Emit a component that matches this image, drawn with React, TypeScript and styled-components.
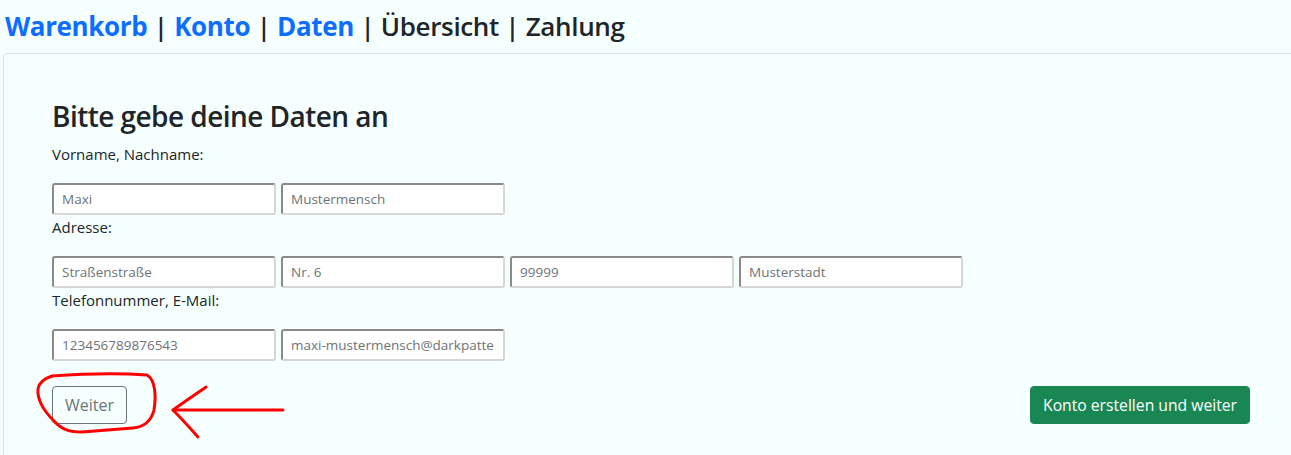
import { createGlobalStyle, styled } from "styled-components";

const GlobalStyle = createGlobalStyle`
  html, body {
    margin: 0;
    padding: 0;
    overflow: hidden;
    background-color: #f5fffe;
  }
  body {
    font-family: "Open Sans", "Noto Sans", sans-serif;
    color: #212529;
  }
`;

const Steps = styled.div`
  margin: 11px 0 11px 5px;
  font-size: 26px;
  line-height: 1.2;
  font-weight: 600;
  letter-spacing: -0.35px;
  white-space: nowrap;
`;

const Step = styled.span<{ $done?: boolean }>`
  color: ${(p) => (p.$done ? "#0d6efd" : "#212529")};
  font-weight: ${(p) => (p.$done ? 700 : 600)};
`;

const Card = styled.div`
  position: relative;
  margin-left: 3px;
  width: 1296px;
  box-sizing: border-box;
  border: 1px solid #dde3e3;
  border-radius: 4px;
  padding: 46px 48px 33px;
`;

const Title = styled.h3`
  margin: 0 0 8px;
  font-size: 28px;
  line-height: 1.2;
  font-weight: 600;
  letter-spacing: -0.55px;
`;

const Label = styled.div`
  font-size: 15px;
  line-height: 24px;
  margin-bottom: 17px;
`;

const Row = styled.div`
  display: flex;
  gap: 5px;
`;

const Field = styled.input`
  width: 224px;
  height: 32px;
  box-sizing: border-box;
  padding: 0 8px;
  border-style: solid;
  border-width: 2px;
  border-color: #8a8a8a #d6d6d6 #d6d6d6 #8a8a8a;
  border-radius: 3px;
  background: #fff;
  font-family: "Open Sans", "Noto Sans", sans-serif;
  font-size: 13.5px;
  color: #212529;
  &::placeholder {
    color: #6e7378;
  }
`;

const Actions = styled.div`
  position: relative;
  display: flex;
  justify-content: space-between;
  align-items: flex-start;
  margin-top: 25px;
`;

const Button = styled.button<{ $primary?: boolean }>`
  font-family: "Open Sans", "Noto Sans", sans-serif;
  font-size: ${(p) => (p.$primary ? "15.7px" : "16px")};
  line-height: 24px;
  padding: 6px 12px;
  border-radius: 4px;
  border: 1px solid ${(p) => (p.$primary ? "#198754" : "#6c757d")};
  background: ${(p) => (p.$primary ? "#198754" : "transparent")};
  color: ${(p) => (p.$primary ? "#fff" : "#6c757d")};
  cursor: pointer;
`;

const Scribble = styled.svg`
  position: absolute;
  left: -30px;
  top: -20px;
  width: 270px;
  height: 80px;
  pointer-events: none;
  overflow: visible;
`;

export default function App() {
  return (
    <>
      <GlobalStyle />
      <Steps>
        <Step $done>Warenkorb</Step> | <Step $done>Konto</Step> |{" "}
        <Step $done>Daten</Step> | <Step>Übersicht</Step> | <Step>Zahlung</Step>
      </Steps>
      <Card>
        <Title>Bitte gebe deine Daten an</Title>
        <Label>Vorname, Nachname:</Label>
        <Row>
          <Field placeholder="Maxi" />
          <Field placeholder="Mustermensch" />
        </Row>
        <Label>Adresse:</Label>
        <Row>
          <Field placeholder="Straßenstraße" />
          <Field placeholder="Nr. 6" />
          <Field placeholder="99999" />
          <Field placeholder="Musterstadt" />
        </Row>
        <Label>Telefonnummer, E-Mail:</Label>
        <Row>
          <Field placeholder="123456789876543" />
          <Field placeholder="maxi-mustermensch@darkpatterns.de" />
        </Row>
        <Actions>
          <Button>Weiter</Button>
          <Button $primary>Konto erstellen und weiter</Button>
          <Scribble viewBox="22 366 270 80">
            <g fill="none" stroke="#ff0000" strokeWidth="3" strokeLinecap="round" strokeLinejoin="round">
              <path d="M52 376 C80 374 120 373 147 375 C156 380 156 398 154 410 C151 422 143 427 133 428 L82 432 C70 432 62 430 54 421 C44 411 37 400 38 389 C39 381 46 378 52 376" />
              <path d="M173 410 L283 410" />
              <path d="M206 387 C196 394 184 402 173 410 C181 418 190 428 198 437" />
            </g>
          </Scribble>
        </Actions>
      </Card>
    </>
  );
}
